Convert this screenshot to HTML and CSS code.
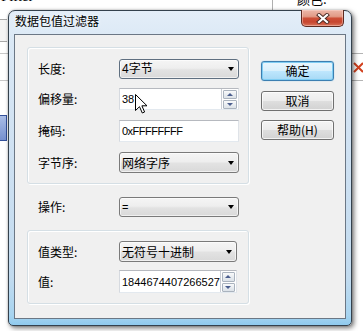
FILE: index.html
```html
<!DOCTYPE html>
<html lang="zh">
<head>
<meta charset="utf-8">
<title>数据包值过滤器</title>
<link rel="stylesheet" href="styles.css">
</head>
<body>
<div class="desk">
  <div class="bg-filter">Filter</div>
  <div class="bg-color">颜色:</div>
  <div class="bg-vline"></div>
  <div class="bg-lbox"></div>
  <div class="bg-lline l1"></div>
  <div class="bg-lline l2"></div>
  <div class="bg-lblue"></div>
  <div class="bg-rline r1"></div>
  <div class="bg-rline r2"></div>
  <svg class="bg-rx" width="11" height="11" viewBox="0 0 11 11"><path d="M1 1 L10 10 M10 1 L1 10" stroke="#d2401e" stroke-width="2" fill="none"/></svg>

  <div class="window">
    <div class="titlebar">
      <span class="title">数据包值过滤器</span>
      <div class="close">
        <svg width="14" height="11" viewBox="0 0 14 11"><path d="M3 2 L11 9 M11 2 L3 9" stroke="#4a2a24" stroke-width="4" stroke-linecap="square" fill="none"/><path d="M3 2 L11 9 M11 2 L3 9" stroke="#ffffff" stroke-width="2.2" stroke-linecap="square" fill="none"/></svg>
      </div>
    </div>
    <div class="client">
      <div class="main">
        <div class="group g1">
          <div class="row">
            <span class="label">长度:</span>
            <div class="combo focus"><span class="mix">4字节</span></div>
          </div>
          <div class="row r-spin">
            <span class="label">偏移量:</span>
            <div class="edit h22"><span class="lat">38</span>
              <div class="spin"><div class="sb up"></div><div class="sb down"></div></div>
            </div>
          </div>
          <div class="row r-mask">
            <span class="label">掩码:</span>
            <div class="edit h22"><span class="lat hex">0xFFFFFFFF</span></div>
          </div>
          <div class="row r-order">
            <span class="label">字节序:</span>
            <div class="combo h21"><span>网络字序</span></div>
          </div>
        </div>
        <div class="row op">
          <span class="label">操作:</span>
          <div class="combo"><span class="lat">=</span></div>
        </div>
        <div class="group g2">
          <div class="row">
            <span class="label">值类型:</span>
            <div class="combo h21 w118"><span>无符号十进制</span></div>
          </div>
          <div class="row r-val">
            <span class="label">值:</span>
            <div class="edit h23 w118"><span class="lat">1844674407266527</span>
              <div class="spin"><div class="sb up"></div><div class="sb down"></div></div>
            </div>
          </div>
        </div>
      </div>
      <div class="buttons">
        <div class="btn default">确定</div>
        <div class="btn b2">取消</div>
        <div class="btn b3">帮助(H)</div>
      </div>
    </div>
  </div>

  <svg class="cursor" width="13" height="21" viewBox="0 0 13 21"><path d="M0.5 0.5 L0.5 16.5 L4.5 12.7 L7.3 19 L9.6 18 L6.9 11.8 L12 11.8 Z" fill="#ffffff" stroke="#000000" stroke-width="1" stroke-linejoin="miter"/></svg>
</div>
</body>
</html>
```

FILE: styles.css
```css
html, body {
  margin: 0;
  padding: 0;
}
body {
  width: 363px;
  height: 331px;
  overflow: hidden;
  background: #ffffff;
  font-family: "Noto Sans CJK SC", "Microsoft YaHei", sans-serif;
  font-size: 12px;
  color: #000;
}
.desk {
  position: relative;
  width: 363px;
  height: 331px;
  overflow: hidden;
}

/* background application pieces */
.bg-filter {
  position: absolute;
  left: 1px;
  top: -11px;
  font-family: "Liberation Serif", serif;
  font-size: 15px;
  line-height: 15px;
}
.bg-color {
  position: absolute;
  left: 297px;
  top: -8px;
  font-size: 13px;
  line-height: 13px;
}
.bg-vline {
  position: absolute;
  left: 272px;
  top: 0;
  width: 1px;
  height: 12px;
  background: #b0b0b0;
}
.bg-lbox {
  position: absolute;
  left: 0;
  top: 19px;
  width: 7px;
  height: 21px;
  border-top: 1px solid #a8a8a8;
  border-bottom: 1px solid #a8a8a8;
  background: #f4f4f4;
}
.bg-lline {
  position: absolute;
  left: 0;
  width: 8px;
  height: 1px;
  background: #c8c8c8;
}
.bg-lline.l1 { top: 53px; }
.bg-lline.l2 { top: 80px; }
.bg-lblue {
  position: absolute;
  left: 0;
  top: 115px;
  width: 7px;
  height: 26px;
  box-sizing: border-box;
  border: 1px solid #33509a;
  border-left: none;
  background: linear-gradient(#a9bde6, #7690cf);
}
.bg-rline {
  position: absolute;
  left: 352px;
  width: 11px;
  height: 1px;
  background: #b4b4b4;
}
.bg-rline.r1 { top: 53px; }
.bg-rline.r2 { top: 80px; }
.bg-rx {
  position: absolute;
  left: 353px;
  top: 62px;
}

/* window */
.window {
  position: absolute;
  left: 8px;
  top: 10px;
  width: 344px;
  height: 316px;
  box-sizing: border-box;
  border: 1px solid #34414d;
  border-radius: 7px 7px 5px 5px;
  background: linear-gradient(180deg, #e4eef8 0%, #dae8f5 10%, #cfe1f2 45%, #c2dbef 85%, #a7d4f0 97%, #8fcaee 100%);
  box-shadow: 2px 2px 5px rgba(0, 0, 0, 0.55), 0 0 2px rgba(0, 0, 0, 0.25);
  padding: 0 5px 6px 5px;
  display: flex;
  flex-direction: column;
}
.titlebar {
  height: 23px;
  display: flex;
  align-items: flex-start;
  flex: none;
}
.title {
  padding-left: 1px;
  padding-top: 3px;
  line-height: 14px;
  font-size: 12px;
  color: #000;
  text-shadow: 0 0 4px rgba(255, 255, 255, 0.9);
}
.close {
  margin-left: auto;
  margin-right: 2px;
  margin-top: -1px;
  width: 43px;
  height: 17px;
  box-sizing: border-box;
  border: 1px solid #5e2a20;
  border-top: none;
  border-radius: 0 0 5px 5px;
  background: linear-gradient(180deg, #ecb7a9 0%, #e29b87 40%, #cd4f37 52%, #c7462f 75%, #d8735a 100%);
  box-shadow: inset 0 0 0 1px rgba(255, 220, 210, 0.45);
  display: flex;
  align-items: center;
  justify-content: center;
}
.close svg {
  display: block;
}

.client {
  flex: 1;
  border: 1px solid #6b7785;
  background: #f0f0f0;
  display: flex;
  padding: 12px 11px 0 12px;
}
.main {
  width: 222px;
  display: flex;
  flex-direction: column;
}

.group {
  border: 1px solid #d5dfe5;
  border-radius: 3px;
  box-shadow: 1px 1px 0 #ffffff, inset 1px 1px 0 #ffffff;
}
.group.g1 {
  height: 137px;
  box-sizing: border-box;
  padding: 11px 9px 0 10px;
}
.group.g2 {
  height: 74px;
  box-sizing: border-box;
  padding: 10px 11px 0 10px;
}

.row {
  display: flex;
  align-items: center;
  justify-content: space-between;
}
.g1 .r-spin { margin-top: 9px; }
.g1 .r-mask { margin-top: 10px; }
.g1 .r-order { margin-top: 10px; }
.g2 .r-val { margin-top: 8px; }
.row.op {
  margin: 13px 0;
  padding: 0 10px 0 11px;
}

.label {
  line-height: 14px;
  white-space: nowrap;
}

.combo {
  width: 120px;
  height: 20px;
  box-sizing: border-box;
  border: 1px solid #7a7a7a;
  border-radius: 3px;
  background: linear-gradient(180deg, #f5f5f5 0%, #eeeeee 45%, #e2e2e2 55%, #d9d9d9 100%);
  box-shadow: inset 0 0 0 1px rgba(255, 255, 255, 0.6);
  display: flex;
  align-items: center;
  padding-left: 2px;
  line-height: 14px;
  white-space: nowrap;
}
.combo::after {
  content: "";
  margin-left: auto;
  margin-right: 4px;
  width: 0;
  height: 0;
  border-left: 3.5px solid transparent;
  border-right: 3.5px solid transparent;
  border-top: 4px solid #000;
}
.combo.focus {
  border-color: #5f6f80;
}
.combo.h21 { height: 21px; }
.combo.w118, .edit.w118 { width: 118px; }

.edit {
  width: 120px;
  box-sizing: border-box;
  border: 1px solid;
  border-color: #b6b9bf #dfe3e8 #e3e9ef #d6dae0;
  background: #ffffff;
  display: flex;
  align-items: center;
  padding-left: 2px;
  line-height: 14px;
  white-space: nowrap;
}
.edit.h22 { height: 22px; }
.edit.h23 { height: 23px; }

.lat {
  font-family: "Liberation Sans", Arial, sans-serif;
  font-size: 11px;
}
.lat.hex {
  letter-spacing: -0.5px;
}
.mix {
  font-family: "Liberation Sans", "Noto Sans CJK SC", sans-serif;
}

.spin {
  margin-left: auto;
  width: 17px;
  align-self: stretch;
  display: flex;
  flex-direction: column;
  box-sizing: border-box;
  border-left: 1px solid #c9ced5;
  padding: 1px 1px 0 1px;
  gap: 1px;
}
.sb {
  flex: 1;
  box-sizing: border-box;
  border: 1px solid #aab3be;
  border-radius: 1px;
  background: linear-gradient(180deg, #f9fafb 0%, #e9edf1 50%, #dce2e8 100%);
  display: flex;
  align-items: center;
  justify-content: center;
}
.sb.up::before {
  content: "";
  width: 0;
  height: 0;
  border-left: 3px solid transparent;
  border-right: 3px solid transparent;
  border-bottom: 3px solid #4b5e8e;
}
.sb.down::before {
  content: "";
  width: 0;
  height: 0;
  border-left: 3px solid transparent;
  border-right: 3px solid transparent;
  border-top: 3px solid #4b5e8e;
}

.buttons {
  margin-left: 12px;
  width: 73px;
  padding-top: 14px;
  display: flex;
  flex-direction: column;
}
.btn {
  height: 20px;
  box-sizing: border-box;
  border: 1px solid #707070;
  border-radius: 3px;
  background: linear-gradient(180deg, #f4f4f4 0%, #ececec 48%, #dedede 52%, #d2d2d2 100%);
  box-shadow: inset 0 0 0 1px rgba(255, 255, 255, 0.7);
  display: flex;
  align-items: center;
  justify-content: center;
  line-height: 14px;
  white-space: nowrap;
}
.btn.default {
  border-color: #3c7fb1;
  background: linear-gradient(180deg, #eaf6fd 0%, #d9f0fc 48%, #bee6fd 52%, #a7d9f5 100%);
  box-shadow: inset 0 0 0 1px #7fcdf3, 0 0 1px #5fb6e8;
}
.btn.b2 { margin-top: 10px; }
.btn.b3 { margin-top: 9px; }

.cursor {
  position: absolute;
  left: 135px;
  top: 94px;
}
```
